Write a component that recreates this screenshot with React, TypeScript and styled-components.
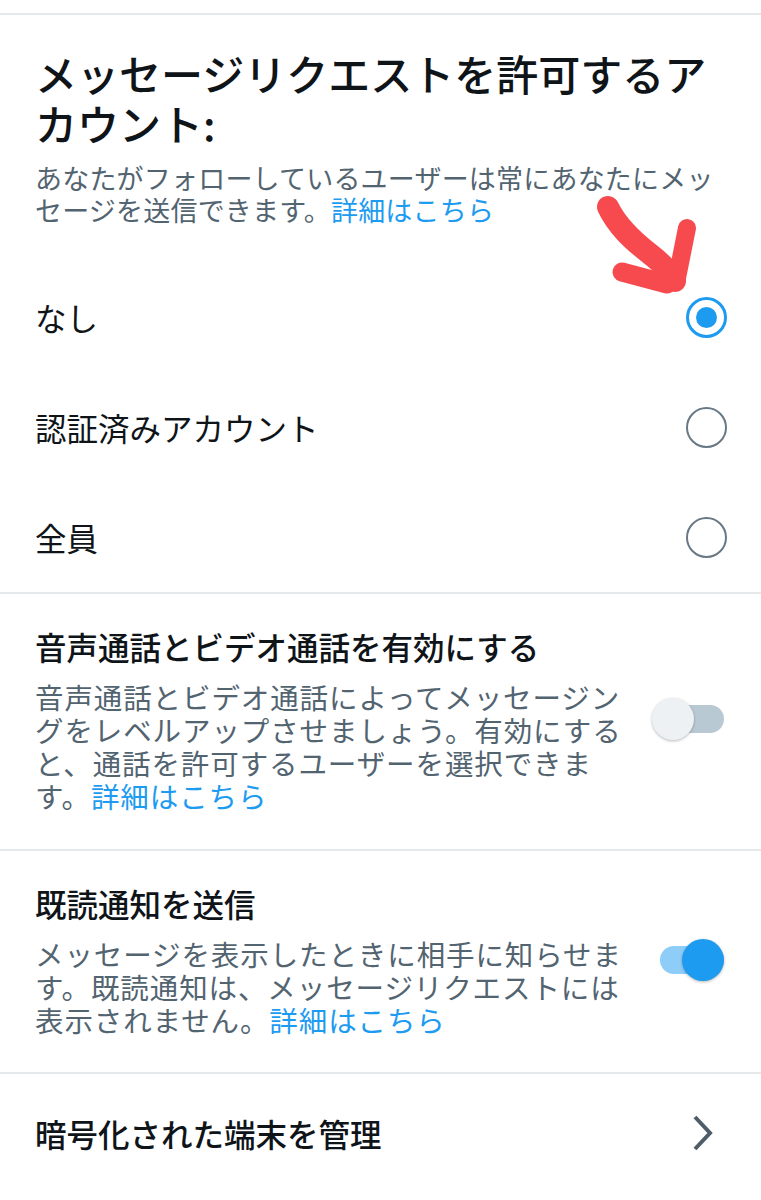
import React from "react";
import styled, { createGlobalStyle } from "styled-components";

const GlobalStyle = createGlobalStyle`
  html, body {
    margin: 0;
    padding: 0;
    background: #ffffff;
  }
  body {
    font-family: "Noto Sans CJK JP", "Noto Sans", "Liberation Sans", sans-serif;
    color: #0f1419;
    -webkit-font-smoothing: antialiased;
  }
`;

const Page = styled.div`
  position: relative;
  width: 761px;
  padding-top: 13px;
  background: #ffffff;
`;

const Divider = styled.div`
  height: 2px;
  background: #e6e9eb;
`;

const Header = styled.div`
  padding: 33px 34px 36px 35px;
`;

const Title = styled.h1`
  margin: 0;
  font-size: 42px;
  line-height: 50px;
  font-weight: 500;
  color: #0f1419;
`;

const Subtitle = styled.p`
  margin: 14px 0 0;
  font-size: 27px;
  line-height: 32px;
  letter-spacing: 0.2px;
  color: #536471;
`;

const Link = styled.span`
  color: #1d9bf0;
`;

const OptionRow = styled.div`
  display: flex;
  align-items: center;
  justify-content: space-between;
  height: 110px;
  padding: 0 34px 0 35px;
`;

const OptionLabel = styled.span`
  font-size: 31.5px;
  line-height: 40px;
  color: #0f1419;
`;

const Radio = styled.span<{ $checked?: boolean }>`
  box-sizing: border-box;
  width: 41px;
  height: 41px;
  border-radius: 50%;
  border: ${(p) => (p.$checked ? "3px solid #1d9bf0" : "2px solid #687884")};
  display: flex;
  align-items: center;
  justify-content: center;
  &::after {
    content: "";
    display: ${(p) => (p.$checked ? "block" : "none")};
    width: 21px;
    height: 21px;
    border-radius: 50%;
    background: #1d9bf0;
  }
`;

const ToggleSection = styled.div<{ $top: number; $bottom: number }>`
  display: flex;
  align-items: center;
  gap: 17px;
  padding: ${(p) => p.$top}px 37px ${(p) => p.$bottom}px 35px;
`;

const TextColumn = styled.div`
  flex: 1;
  min-width: 0;
`;

const SectionTitle = styled.div`
  font-size: 31.5px;
  line-height: 40px;
  font-weight: 500;
  color: #0f1419;
`;

const Description = styled.p`
  margin: 14px 0 0;
  font-size: 28.5px;
  line-height: 33px;
  letter-spacing: 0.9px;
  color: #536471;
`;

const Toggle = styled.span<{ $on?: boolean }>`
  position: relative;
  flex: none;
  width: 72px;
  height: 44px;
  &::before {
    content: "";
    position: absolute;
    left: 8px;
    right: 0;
    top: 8px;
    height: 28px;
    border-radius: 14px;
    background: ${(p) => (p.$on ? "#8ecdf8" : "#b9c9d4")};
  }
  &::after {
    content: "";
    position: absolute;
    top: 1px;
    left: ${(p) => (p.$on ? "30px" : "0px")};
    width: 42px;
    height: 42px;
    border-radius: 50%;
    background: ${(p) => (p.$on ? "#1d9bf0" : "#eef1f3")};
    box-shadow: 0 1px 3px rgba(0, 0, 0, 0.28);
  }
`;

const NavRow = styled.div`
  display: flex;
  align-items: center;
  justify-content: space-between;
  height: 118px;
  padding: 0 47px 0 35px;
`;

const NavLabel = styled.span`
  font-size: 31.5px;
  line-height: 40px;
  font-weight: 500;
  color: #0f1419;
`;

const Annotation = styled.svg`
  position: absolute;
  left: 590px;
  top: 190px;
  width: 110px;
  height: 110px;
  overflow: visible;
  pointer-events: none;
`;

const Chevron = () => (
  <svg width="22" height="38" viewBox="0 0 22 38" fill="none">
    <path
      d="M3 3 L18 19 L3 35"
      stroke="#4f5d69"
      strokeWidth="4"
      strokeLinecap="butt"
      strokeLinejoin="miter"
    />
  </svg>
);

const options = [
  { label: "なし", checked: true },
  { label: "認証済みアカウント", checked: false },
  { label: "全員", checked: false },
];

export default function App() {
  return (
    <>
      <GlobalStyle />
      <Page>
        <Divider />
        <Header>
          <Title>メッセージリクエストを許可するアカウント:</Title>
          <Subtitle>
            あなたがフォローしているユーザーは常にあなたにメッセージを送信できます。
            <Link>詳細はこちら</Link>
          </Subtitle>
        </Header>
        {options.map((o) => (
          <OptionRow key={o.label}>
            <OptionLabel>{o.label}</OptionLabel>
            <Radio $checked={o.checked} />
          </OptionRow>
        ))}
        <Divider />
        <ToggleSection $top={32} $bottom={37}>
          <TextColumn>
            <SectionTitle>音声通話とビデオ通話を有効にする</SectionTitle>
            <Description>
              音声通話とビデオ通話によってメッセージングをレベルアップさせましょう。有効にすると、通話を許可するユーザーを選択できます。
              <Link>詳細はこちら</Link>
            </Description>
          </TextColumn>
          <Toggle />
        </ToggleSection>
        <Divider />
        <ToggleSection $top={32} $bottom={36}>
          <TextColumn>
            <SectionTitle>既読通知を送信</SectionTitle>
            <Description>
              メッセージを表示したときに相手に知らせます。既読通知は、メッセージリクエストには表示されません。
              <Link>詳細はこちら</Link>
            </Description>
          </TextColumn>
          <Toggle $on />
        </ToggleSection>
        <Divider />
        <NavRow>
          <NavLabel>暗号化された端末を管理</NavLabel>
          <Chevron />
        </NavRow>
        <Annotation viewBox="0 0 110 110">
          <g stroke="#f64a4f" strokeLinecap="round" strokeLinejoin="round" fill="none">
            <path d="M18 17 C 27 36, 42 50, 60 64 S 80 84, 85 91" strokeWidth="22" />
            <path d="M32 82 L 77 94" strokeWidth="19" />
            <path d="M97 38 L 87 88" strokeWidth="18" />
          </g>
        </Annotation>
      </Page>
    </>
  );
}
